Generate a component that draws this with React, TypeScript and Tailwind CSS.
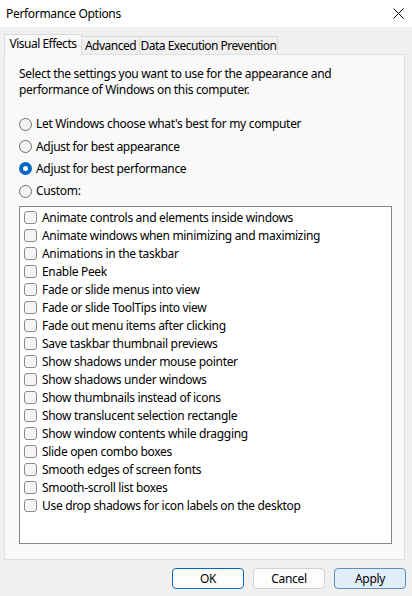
import React from "react";

const items = [
  "Animate controls and elements inside windows",
  "Animate windows when minimizing and maximizing",
  "Animations in the taskbar",
  "Enable Peek",
  "Fade or slide menus into view",
  "Fade or slide ToolTips into view",
  "Fade out menu items after clicking",
  "Save taskbar thumbnail previews",
  "Show shadows under mouse pointer",
  "Show shadows under windows",
  "Show thumbnails instead of icons",
  "Show translucent selection rectangle",
  "Show window contents while dragging",
  "Slide open combo boxes",
  "Smooth edges of screen fonts",
  "Smooth-scroll list boxes",
  "Use drop shadows for icon labels on the desktop",
];

const radios = [
  { label: "Let Windows choose what's best for my computer", checked: false },
  { label: "Adjust for best appearance", checked: false },
  { label: "Adjust for best performance", checked: true },
  { label: "Custom:", checked: false },
];

function Radio({ checked }: { checked: boolean }) {
  if (checked) {
    return (
      <span className="w-[13px] h-[13px] rounded-full bg-[#0067c0] flex items-center justify-center shrink-0">
        <span className="w-[5px] h-[5px] rounded-full bg-white" />
      </span>
    );
  }
  return <span className="w-[13px] h-[13px] rounded-full border border-[#6e6e6e] bg-[#f4f4f4] shrink-0" />;
}

export default function App() {
  return (
    <div
      className="w-[412px] h-[596px] bg-[#f0f0f0] flex flex-col text-black text-[12px] leading-[16px] tracking-[-0.32px]"
      style={{ fontFamily: '"Noto Sans", "Open Sans", sans-serif' }}
    >
      {/* Title bar */}
      <div className="h-[27px] bg-white flex items-center justify-between shrink-0">
        <span className="pl-[6px] pt-[1px] whitespace-nowrap">Performance Options</span>
        <svg width="11" height="11" viewBox="0 0 11 11" className="mr-[8px]">
          <path d="M0.5 0.5 L10.5 10.5 M10.5 0.5 L0.5 10.5" stroke="#000" strokeWidth="1" />
        </svg>
      </div>

      {/* Tabs */}
      <div className="flex items-end pl-[4px] pt-[7px] shrink-0 relative z-10 whitespace-nowrap tracking-[-0.5px]">
        <div className="h-[21px] w-[78px] -mb-px bg-[#f9f9f9] border border-b-0 border-[#dcdcdc] flex items-center justify-center pb-[2px]">
          Visual Effects
        </div>
        <div className="h-[18px] w-[58px] bg-[#f0f0f0] border border-l-0 border-b-0 border-[#d9d9d9] flex items-center justify-center">
          Advanced
        </div>
        <div className="h-[18px] w-[138px] bg-[#f0f0f0] border border-l-0 border-b-0 border-[#d9d9d9] flex items-center justify-center">
          Data Execution Prevention
        </div>
      </div>

      {/* Panel */}
      <div className="ml-[4px] w-[401px] h-[506px] bg-[#f9f9f9] border border-[#dfdfdf] flex flex-col pl-[14px] pt-[11px] shrink-0">
        <p className="w-[330px]">
          Select the settings you want to use for the appearance and performance of Windows on this computer.
        </p>
        <div className="flex flex-col mt-[15px]">
          {radios.map((r) => (
            <div key={r.label} className="h-[22.4px] flex items-center gap-[4px] whitespace-nowrap">
              <Radio checked={r.checked} />
              <span>{r.label}</span>
            </div>
          ))}
        </div>
        <div className="mt-[3px] w-[373px] h-[338px] bg-white border border-[#82878f] flex flex-col pt-[2px] pl-[4px]">
          {items.map((t) => (
            <div key={t} className="h-[18px] flex items-center gap-[5px] whitespace-nowrap">
              <span className="w-[13px] h-[13px] rounded-[3px] border border-[#8a8a8a] bg-[#f5f5f5] shrink-0" />
              <span>{t}</span>
            </div>
          ))}
        </div>
      </div>

      {/* Buttons */}
      <div className="flex justify-end gap-[9px] pr-[6px] mt-[8px]">
        <button className="w-[72px] h-[21px] rounded-[4px] border border-[#0067c0] bg-[#fdfdfd] flex items-center justify-center">
          OK
        </button>
        <button className="w-[72px] h-[21px] rounded-[4px] border border-[#d0d0d0] bg-[#fdfdfd] flex items-center justify-center">
          Cancel
        </button>
        <button className="w-[72px] h-[21px] rounded-[4px] border border-[#5b8fc4] bg-[#e0eef9] flex items-center justify-center">
          Apply
        </button>
      </div>
    </div>
  );
}
